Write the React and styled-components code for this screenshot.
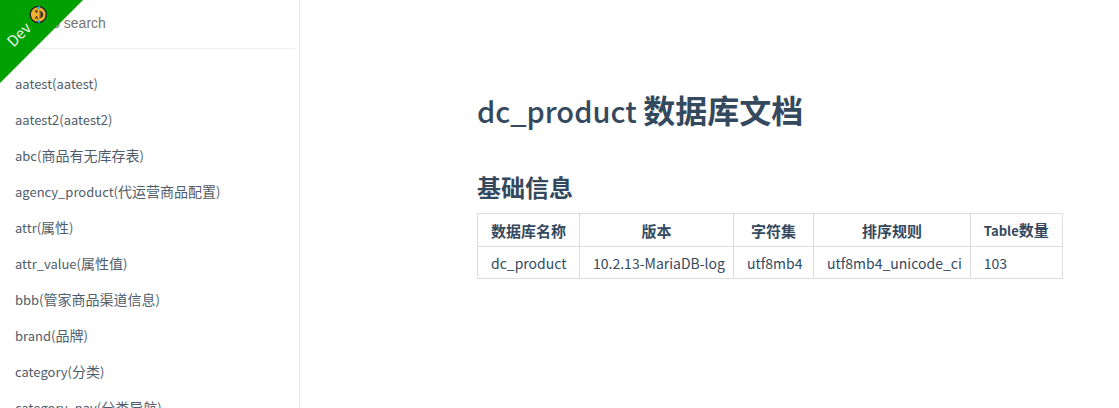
import React from "react";
import styled, { createGlobalStyle } from "styled-components";

const GlobalStyle = createGlobalStyle`
  * { box-sizing: border-box; }
  body {
    margin: 0;
    height: 100vh;
    overflow: hidden;
    background: #fff;
    color: #34495e;
    font-family: "Noto Sans CJK SC", "Noto Sans", sans-serif;
    font-size: 15px;
  }
`;

const Page = styled.div`
  display: flex;
  height: 100vh;
`;

const Sidebar = styled.aside`
  flex: 0 0 300px;
  height: 100%;
  overflow: hidden;
  padding-right: 4px;
  border-right: 1px solid #e8e8e8;
`;

const Search = styled.form`
  padding: 4px 6px 7px;
  margin-bottom: 16px;
  border-bottom: 1px solid #eee;
`;

const SearchInput = styled.input`
  display: block;
  width: 100%;
  height: 37px;
  padding: 0 8px;
  border: 0;
  outline: 0;
  background: transparent;
  font: 14px "Liberation Sans", Arial, sans-serif;
  &::placeholder { color: #757575; }
`;

const NavList = styled.ul`
  margin: 0;
  padding: 0 0 0 15px;
  list-style: none;
`;

const NavLink = styled.a`
  display: block;
  height: 36px;
  color: #505d6b;
  font-size: 14px;
  line-height: 36px;
  text-decoration: none;
  white-space: nowrap;
`;

const Latin = styled.span`
  font-size: ${(p) => p.$size}px;
  font-weight: ${(p) => p.$weight || "inherit"};
`;

const Content = styled.main`
  flex: 1;
  min-width: 0;
  padding: 85px 15px 0 177px;
`;

const Title = styled.h1`
  margin: 0;
  font-size: 32px;
  line-height: 48px;
`;

const Heading = styled.h2`
  margin: 35px 0 8px;
  font-size: 24px;
  line-height: 36px;
`;

const Table = styled.table`
  border-collapse: collapse;
  white-space: nowrap;
  line-height: 20px;
`;

const Column = styled.col`
  width: ${(p) => p.$width}px;
`;

const HeadCell = styled.th`
  padding: 6px 13px 5px;
  border: 1px solid #ddd;
  font-weight: bold;
`;

const Cell = styled.td`
  padding: 6px 8px 5px 13px;
  border: 1px solid #ddd;
  font-size: 14px;
`;

const Ribbon = styled.div`
  position: absolute;
  top: 0;
  left: 0;
  width: 83px;
  height: 83px;
  background: #00a000;
  clip-path: polygon(0 0, 100% 0, 0 100%);
`;

const RibbonLabel = styled.div`
  position: absolute;
  top: 16px;
  left: 2px;
  display: flex;
  align-items: center;
  gap: 5px;
  color: #e8f5e8;
  font-size: 15px;
  line-height: 20px;
  transform: rotate(-45deg);
`;

const Face = () => (
  <svg width="18" height="18" viewBox="0 0 18 18" aria-hidden="true">
    <g transform="rotate(-45 9 9)">
      <circle cx="9" cy="9" r="8" fill="#f5b32f" stroke="#222" strokeWidth="1.4" />
      <path d="M4.4 5.8 L7.4 7.4 L4.4 8.2 M13.6 5.8 L10.6 7.4 L13.6 8.2" fill="none" stroke="#3a2815" strokeWidth="1" />
      <path d="M5 9.8 H13 Q12.6 14 9 14 Q5.4 14 5 9.8Z" fill="#50351b" />
      <path d="M5.8 10.2 H12.2 V11 H5.8Z" fill="#ccc" />
      <path d="M4 7.6 Q.6 8 .8 10.6 Q3.8 12 4 7.6Z M14 7.6 Q17.4 8 17.2 10.6 Q14.2 12 14 7.6Z" fill="#27b4e8" />
    </g>
  </svg>
);

const tables = [
  ["aatest", "aatest"],
  ["aatest2", "aatest2"],
  ["abc", "商品有无库存表"],
  ["agency_product", "代运营商品配置"],
  ["attr", "属性"],
  ["attr_value", "属性值"],
  ["bbb", "管家商品渠道信息"],
  ["brand", "品牌"],
  ["category", "分类"],
  ["category_nav", "分类导航"],
];

const isLatin = (text) => /^\w+$/.test(text);

const NavItem = ({ name, note }) => (
  <li>
    <NavLink href={`#${name}`}>
      <Latin $size={13}>{isLatin(note) ? `${name}(${note})` : `${name}(`}</Latin>
      {!isLatin(note) && (
        <>
          {note}
          <Latin $size={13}>)</Latin>
        </>
      )}
    </NavLink>
  </li>
);

export default function App() {
  return (
    <>
      <GlobalStyle />
      <Page>
        <Sidebar>
          <Search>
            <SearchInput type="search" aria-label="Search" placeholder="Type to search" />
          </Search>
          <nav>
            <NavList>
              {tables.map(([name, note]) => (
                <NavItem key={name} name={name} note={note} />
              ))}
            </NavList>
          </nav>
        </Sidebar>
        <Content>
          <Title>
            <Latin $size={29} $weight={500}>dc_product </Latin>数据库文档
          </Title>
          <Heading>基础信息</Heading>
          <Table>
            <colgroup>
              <Column $width={102} />
              <Column $width={154} />
              <Column $width={80} />
              <Column $width={156} />
              <Column $width={92} />
            </colgroup>
            <thead>
              <tr>
                <HeadCell>数据库名称</HeadCell>
                <HeadCell>版本</HeadCell>
                <HeadCell>字符集</HeadCell>
                <HeadCell>排序规则</HeadCell>
                <HeadCell><Latin $size={13}>Table</Latin>数量</HeadCell>
              </tr>
            </thead>
            <tbody>
              <tr>
                <Cell>dc_product</Cell>
                <Cell>10.2.13-MariaDB-log</Cell>
                <Cell>utf8mb4</Cell>
                <Cell>utf8mb4_unicode_ci</Cell>
                <Cell>103</Cell>
              </tr>
            </tbody>
          </Table>
        </Content>
      </Page>
      <Ribbon>
        <RibbonLabel>
          Dev <Face />
        </RibbonLabel>
      </Ribbon>
    </>
  );
}
